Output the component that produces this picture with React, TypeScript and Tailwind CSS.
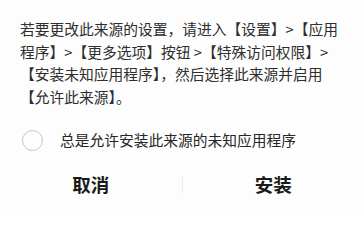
import { useState } from 'react'

const lines = [
  '若要更改此来源的设置，请进入【设置】>【应用',
  '程序】>【更多选项】按钮 >【特殊访问权限】>',
  '【安装未知应用程序】，然后选择此来源并启用',
  '【允许此来源】。',
]

export default function App() {
  const [checked, setChecked] = useState(false)

  return (
    <div
      className="w-[364px] h-[214px] bg-[#fdfdfd] text-[#2e2e2e] overflow-hidden"
      style={{ fontFamily: '"Noto Sans CJK SC", "Noto Sans", sans-serif' }}
    >
      <div className="pl-[20px] pt-[18px] text-[14.75px] leading-[22.5px]">
        {lines.map((l) => (
          <div key={l} className="whitespace-nowrap">
            {l}
          </div>
        ))}
      </div>

      <button
        onClick={() => setChecked(!checked)}
        className="mt-[21px] flex items-center h-[22px] pl-[22px]"
      >
        <span
          className={
            checked
              ? 'w-[21px] h-[21px] rounded-full border-[6px] border-[#256fff]'
              : 'w-[21px] h-[21px] rounded-full border-[1.5px] border-[#c4c4c4]'
          }
        />
        <span className="ml-[17px] text-[14.75px] text-[#262626]">总是允许安装此来源的未知应用程序</span>
      </button>

      <div className="mt-[23px] flex items-center h-[20px]">
        <button className="flex-1 text-[18.5px] font-bold text-[#1a1a1a] leading-none">取消</button>
        <div className="w-px h-[17px] bg-[#ececec]" />
        <button className="flex-1 text-[18.5px] font-bold text-[#1a1a1a] leading-none">安装</button>
      </div>
    </div>
  )
}
